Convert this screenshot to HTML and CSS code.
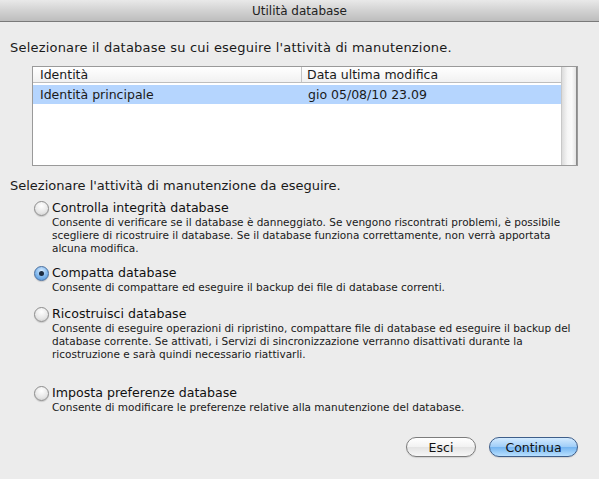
FILE: index.html
```html
<!DOCTYPE html>
<html lang="it">
  <head>
    <meta charset="utf-8">
    <link rel="stylesheet" href="styles.css">
  </head>
  <body>
    <div class="window">
      <div class="titlebar">Utilità database</div>

      <div class="content">
        <p class="prompt first">Selezionare il database su cui eseguire l'attività di manutenzione.</p>

        <div class="table-box">
          <div class="table">
            <div class="row head">
              <div class="cell col1">Identità</div>
              <div class="cell col2">Data ultima modifica</div>
            </div>
            <div class="row selected">
              <div class="cell col1">Identità principale</div>
              <div class="cell col2">gio 05/08/10 23.09</div>
            </div>
          </div>
          <div class="scrollbar"></div>
        </div>

        <p class="prompt second">Selezionare l'attività di manutenzione da eseguire.</p>

        <div class="options">
          <div class="option">
            <div class="label"><span class="radio"></span>Controlla integrità database</div>
            <p class="desc">Consente di verificare se il database è danneggiato. Se vengono riscontrati problemi, è possibile<br>scegliere di ricostruire il database. Se il database funziona correttamente, non verrà apportata<br>alcuna modifica.</p>
          </div>
          <div class="option">
            <div class="label"><span class="radio on"></span>Compatta database</div>
            <p class="desc">Consente di compattare ed eseguire il backup dei file di database correnti.</p>
          </div>
          <div class="option">
            <div class="label"><span class="radio"></span>Ricostruisci database</div>
            <p class="desc">Consente di eseguire operazioni di ripristino, compattare file di database ed eseguire il backup del<br>database corrente. Se attivati, i Servizi di sincronizzazione verranno disattivati durante la<br>ricostruzione e sarà quindi necessario riattivarli.</p>
          </div>
          <div class="option last">
            <div class="label"><span class="radio"></span>Imposta preferenze database</div>
            <p class="desc">Consente di modificare le preferenze relative alla manutenzione del database.</p>
          </div>
        </div>

        <div class="buttons">
          <button class="btn">Esci</button>
          <button class="btn default">Continua</button>
        </div>
      </div>
    </div>
  </body>
</html>
```

FILE: styles.css
```css
body {
  margin: 0;
  background: #ececec;
  font-family: "DejaVu Sans", "Liberation Sans", sans-serif;
  color: #1a1a1a;
}

p {
  margin: 0;
}

.window {
  width: 599px;
  height: 479px;
  background: #ececec;
  display: flex;
  flex-direction: column;
}

.titlebar {
  height: 21px;
  line-height: 22px;
  text-align: center;
  font-size: 12px;
  color: #222;
  background: linear-gradient(#e9e9e9, #d2d2d2 50%, #bdbdbd);
  border-bottom: 1px solid #7a7a7a;
}

.content {
  display: flex;
  flex-direction: column;
  padding: 0 10px;
}

.prompt {
  font-size: 13px;
  line-height: 16px;
}

.prompt.first {
  margin-top: 18px;
  letter-spacing: 0.2px;
}

.prompt.second {
  margin-top: 12px;
}

/* list box */
.table-box {
  margin: 10px 0 0 22px;
  width: 546px;
  height: 100px;
  box-sizing: border-box;
  border: 1px solid #9a9a9a;
  background: #fff;
  display: flex;
}

.table {
  flex: 1;
}

.row {
  display: flex;
}

.row.head {
  height: 15px;
  background: linear-gradient(#ffffff, #f1f1f1);
  border-bottom: 1px solid #bdbdbd;
}

.row.selected {
  height: 19px;
  margin-top: 2px;
  background: #b5d5fe;
}

.cell {
  font-size: 12.5px;
  line-height: 15px;
  padding-left: 7px;
  box-sizing: border-box;
}

.row.selected .cell {
  line-height: 19px;
}

.col1 {
  width: 269px;
}

.head .col1 {
  border-right: 1px solid #c4c4c4;
}

.col2 {
  flex: 1;
  padding-left: 5px;
}

.row.selected .col2 {
  padding-left: 6px;
}

.scrollbar {
  width: 14px;
  border-left: 1px solid #c8c8c8;
  border-right: 1px solid #8a8a8a;
  background: linear-gradient(90deg, #dcdcdc, #f6f6f6 40%, #fafafa 70%, #e4e4e4);
}

/* options */
.options {
  display: flex;
  flex-direction: column;
  padding-left: 24px;
  margin-top: 6px;
}

.option {
  margin-bottom: 10px;
}

.option:nth-child(3) {
  margin-top: 2px;
  margin-bottom: 24px;
}

.label {
  display: flex;
  align-items: center;
  font-size: 12.6px;
  line-height: 16px;
  color: #111;
}

.radio {
  width: 13px;
  height: 13px;
  margin-right: 3px;
  border-radius: 50%;
  border: 1px solid #8c8c8c;
  background: radial-gradient(circle at 50% 30%, #ffffff, #e6e6e6 60%, #c9c9c9);
  box-shadow: 0 1px 1px rgba(0, 0, 0, 0.15);
  display: flex;
  align-items: center;
  justify-content: center;
}

.radio.on {
  border-color: #4a6f9e;
  background: radial-gradient(circle at 50% 30%, #d8ecff, #7fb6ec 55%, #4d8fd6);
}

.radio.on::after {
  content: "";
  width: 5px;
  height: 5px;
  border-radius: 50%;
  background: #1c2b3f;
}

.desc {
  font-size: 10.5px;
  line-height: 13px;
  padding-left: 18px;
  color: #1a1a1a;
}

/* buttons */
.buttons {
  display: flex;
  justify-content: flex-end;
  gap: 13px;
  margin-top: 13px;
  padding-right: 11px;
}

.btn {
  height: 20px;
  padding: 0;
  border-radius: 10px;
  border: 1px solid #7c7c7c;
  background: linear-gradient(#ffffff, #f2f2f2 50%, #e3e3e3 51%, #f7f7f7);
  font-family: "DejaVu Sans", "Liberation Sans", sans-serif;
  font-size: 12.5px;
  color: #111;
  width: 70px;
  box-shadow: 0 1px 1px rgba(0, 0, 0, 0.12);
}

.btn.default {
  width: 89px;
  border-color: #3e5e8a;
  background: linear-gradient(#d4ebff, #9fcdf8 50%, #74b4f0 51%, #b8e0ff);
}
```
